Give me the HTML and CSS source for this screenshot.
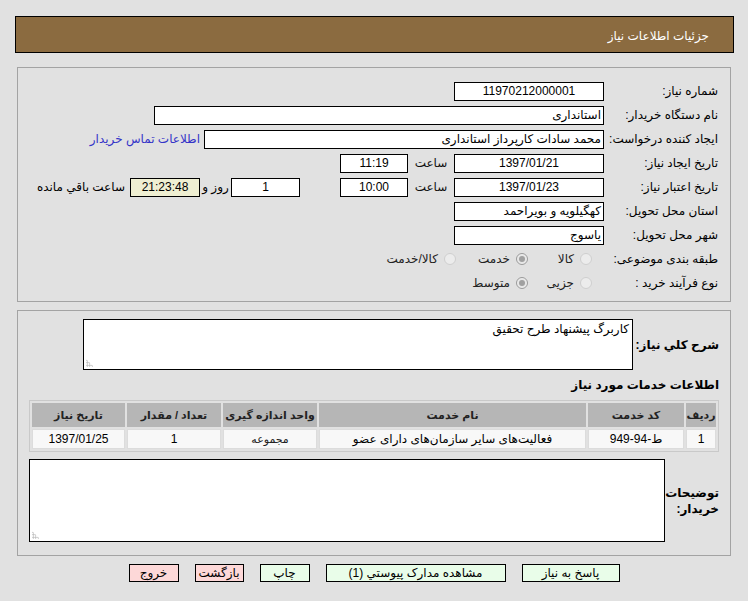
FILE: index.html
```html
<!DOCTYPE html>
<html lang="fa" dir="rtl">
<head>
<meta charset="utf-8">
<title>جزئیات اطلاعات نیاز</title>
<link rel="stylesheet" href="styles.css">
</head>
<body>
<div class="header">جزئیات اطلاعات نیاز</div>

<div class="panel panel-info">
  <div class="row">
    <div class="lbl">شماره نیاز:</div>
    <div class="inp w150 c">11970212000001</div>
  </div>
  <div class="row">
    <div class="lbl">نام دستگاه خریدار:</div>
    <div class="inp w450">استانداری</div>
  </div>
  <div class="row">
    <div class="lbl">ایجاد کننده درخواست:</div>
    <div class="inp w400">محمد سادات کارپرداز استانداری</div>
    <a class="link" href="#">اطلاعات تماس خریدار</a>
  </div>
  <div class="row">
    <div class="lbl">تاریخ ایجاد نیاز:</div>
    <div class="inp w150 c">1397/01/21</div>
    <div class="mid">ساعت</div>
    <div class="inp w68 c">11:19</div>
  </div>
  <div class="row">
    <div class="lbl">تاریخ اعتبار نیاز:</div>
    <div class="inp w150 c">1397/01/23</div>
    <div class="mid">ساعت</div>
    <div class="inp w68 c">10:00</div>
    <div class="inp w69 c days">1</div>
    <div class="and">روز و</div>
    <div class="inp w70 c remain">21:23:48</div>
    <div class="remain-lbl">ساعت باقي مانده</div>
  </div>
  <div class="row">
    <div class="lbl">استان محل تحویل:</div>
    <div class="inp w150">کهگیلویه و بویراحمد</div>
  </div>
  <div class="row">
    <div class="lbl">شهر محل تحویل:</div>
    <div class="inp w150">یاسوج</div>
  </div>
  <div class="row">
    <div class="lbl">طبقه بندی موضوعی:</div>
    <div class="opts">
      <span class="opt o1"><span class="radio"></span>کالا</span>
      <span class="opt o2"><span class="radio on"></span>خدمت</span>
      <span class="opt o3"><span class="radio"></span>کالا/خدمت</span>
    </div>
  </div>
  <div class="row">
    <div class="lbl">نوع فرآیند خرید :</div>
    <div class="opts">
      <span class="opt o1"><span class="radio"></span>جزیی</span>
      <span class="opt o4"><span class="radio on"></span>متوسط</span>
    </div>
  </div>
</div>

<div class="panel panel-desc">
  <div class="desc-row">
    <div class="desc-lbl">شرح کلي نیاز:</div>
    <div class="ta ta1">کاربرگ پیشنهاد طرح تحقیق<span class="grip"></span></div>
  </div>
  <div class="section-title">اطلاعات خدمات مورد نیاز</div>
  <table class="grid">
    <thead>
      <tr>
        <th class="col1">ردیف</th>
        <th class="col2">کد خدمت</th>
        <th class="col3">نام خدمت</th>
        <th class="col4">واحد اندازه گیری</th>
        <th class="col5">تعداد / مقدار</th>
        <th class="col6">تاریخ نیاز</th>
      </tr>
    </thead>
    <tbody>
      <tr>
        <td>1</td>
        <td>ط-94-949</td>
        <td>فعالیت‌های سایر سازمان‌های دارای عضو</td>
        <td class="unit">مجموعه</td>
        <td>1</td>
        <td>1397/01/25</td>
      </tr>
    </tbody>
  </table>
  <div class="notes-row">
    <div class="notes-lbl">توضیحات<br>خریدار:</div>
    <div class="ta ta2"><span class="grip"></span></div>
  </div>
</div>

<div class="buttons">
  <span class="btn green b1">پاسخ به نیاز</span>
  <span class="btn green b2">مشاهده مدارک پیوستي (1)</span>
  <span class="btn green b3">چاپ</span>
  <span class="btn pink b4">بازگشت</span>
  <span class="btn pink b5">خروج</span>
</div>
</body>
</html>
```
FILE: styles.css
```css
* { box-sizing: border-box; }
body {
  margin: 0;
  background: #e1e1e1;
  direction: rtl;
  font-family: "Liberation Sans", "DejaVu Sans", sans-serif;
  font-size: 12px;
  color: #000;
}
.header {
  margin: 16px 14px 0 15px;
  height: 37px;
  border: 1px solid #000;
  background: #8b6b40;
  color: #fff;
  display: flex;
  align-items: center;
  padding: 2px 24px 0 0;
  font-size: 12px;
}
.panel {
  margin: 0 17px;
  border: 1px solid #a3a3a3;
}
.panel-info {
  margin-top: 14px;
  padding: 11px 12px 6px;
}
.row {
  display: flex;
  align-items: center;
  height: 24px;
  white-space: nowrap;
}
.lbl { width: 114px; flex: none; }
.inp {
  flex: none;
  height: 19px;
  border: 1px solid #000;
  background: #fff;
  display: flex;
  align-items: center;
  padding: 0 2px;
  overflow: hidden;
  white-space: nowrap;
  font-size: 12px;
}
.c { justify-content: center; }
.w150 { width: 150px; }
.w450 { width: 450px; }
.w400 { width: 400px; }
.w68 { width: 68px; }
.w69 { width: 69px; }
.w70 { width: 70px; }
.link { color: #3434c8; text-decoration: none; margin-right: 4px; }
.mid { width: 46px; text-align: center; flex: none; color: #111; }
.days { margin-right: 40px; }
.and { width: 31px; text-align: center; flex: none; }
.remain { background: #efefd2; }
.remain-lbl { margin-right: 5px; }
.opts { display: flex; align-items: center; }
.opt { display: flex; align-items: center; flex: none; color: #222; }
.o1 { width: 64px; }
.o2 { width: 72px; }
.o4 { width: 72px; }
.radio {
  width: 12px;
  height: 12px;
  border-radius: 50%;
  border: 1px solid #cfcfcf;
  background: #ececec;
  margin: 0 12px 0 6px;
  display: inline-flex;
  align-items: center;
  justify-content: center;
  flex: none;
}
.radio.on::after {
  content: "";
  width: 6px;
  height: 6px;
  border-radius: 50%;
  background: #a0a0a0;
  box-shadow: 0 0 0 1px #e6e6e6;
}
.radio.on { border-color: #9a9a9a; }

.panel-desc {
  margin-top: 8px;
  padding: 8px 11px 13px 12px;
}
.desc-row { display: flex; align-items: center; }
.desc-lbl { width: 86px; flex: none; font-weight: bold; font-size: 12px; white-space: nowrap; }
.ta {
  flex: none;
  border: 1px solid #000;
  background: #fff;
  position: relative;
  padding: 2px 3px;
}
.ta1 { width: 550px; height: 51px; }
.ta2 { width: 636px; height: 83px; }
.grip {
  position: absolute;
  left: 2px;
  bottom: 2px;
  width: 8px;
  height: 8px;
  background-image: radial-gradient(circle, #b8b8b8 0.8px, transparent 1px);
  background-size: 2.5px 2.5px;
  clip-path: polygon(0 0, 0 100%, 100% 100%);
}
.section-title {
  margin: 7px 0 0;
  height: 16px;
  line-height: 16px;
  font-weight: bold;
  font-size: 12px;
}
.grid {
  margin: 7px 0 0 0;
  width: 690px;
  border: 1px solid #c9c9c9;
  border-spacing: 2px;
  table-layout: fixed;
}
.grid th {
  background: #b6b6b6;
  height: 24px;
  font-weight: bold;
  font-size: 11px;
  color: #222;
  padding: 0;
  white-space: nowrap;
}
.grid td {
  background: #f8f8f8;
  height: 20px;
  line-height: 16px;
  text-align: center;
  padding: 0;
  border: 1px solid #dcdcdc;
  white-space: nowrap;
  overflow: hidden;
}
.grid td.unit { font-size: 11px; color: #222; }
.col1 { width: 30px; }
.col2 { width: 96px; }
.col3 { width: 267px; }
.col4 { width: 94px; }
.col5 { width: 94px; }
.col6 { width: 93px; }
.notes-row { display: flex; align-items: center; margin-top: 7px; }
.notes-lbl { width: 54px; flex: none; font-weight: bold; font-size: 12px; line-height: 16px; white-space: nowrap; }

.buttons {
  display: flex;
  justify-content: center;
  gap: 16px;
  margin-top: 8px;
}
.btn {
  height: 18px;
  border: 1px solid #000;
  display: flex;
  align-items: center;
  justify-content: center;
  font-size: 12px;
  white-space: nowrap;
}
.green { background: #e9fde9; }
.pink { background: #fdd8d8; }
.b1 { width: 98px; }
.b2 { width: 180px; }
.b3 { width: 50px; }
.b4 { width: 49px; }
.b5 { width: 50px; }
```
